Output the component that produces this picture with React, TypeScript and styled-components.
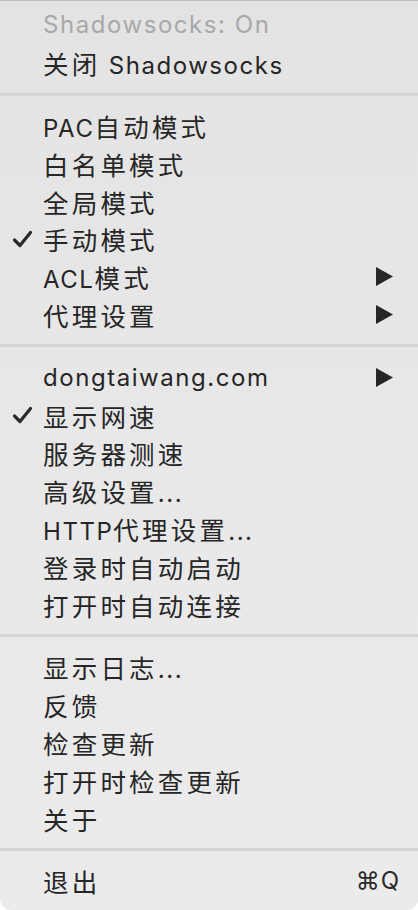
import React from "react";
import styled, { createGlobalStyle } from "styled-components";

const Global = createGlobalStyle`
  html, body { margin: 0; padding: 0; background: #ffffff; }
  body { font-family: Inter, "Noto Sans CJK SC", sans-serif; }
`;

const Menu = styled.div`
  width: 418px;
  height: 910px;
  box-sizing: border-box;
  background: linear-gradient(180deg, #e3e3e3 0%, #e8e8e8 50%, #ebebeb 100%);
  border-top: 1px solid #bdbdbd;
  border-radius: 0 0 11px 11px;
  padding-top: 5px;
  display: flex;
  flex-direction: column;
  overflow: hidden;
  font-family: Inter, "Noto Sans CJK SC", sans-serif;
`;

const Row = styled.div<{ $disabled?: boolean }>`
  height: 37.8px;
  display: flex;
  align-items: center;
  padding: 0 18px 0 43px;
  position: relative;
  color: ${(p) => (p.$disabled ? "#a8a8a8" : "#262626")};
`;

const Label = styled.span`
  flex: 1;
  white-space: nowrap;
  display: flex;
  align-items: baseline;
`;

const Latin = styled.span`
  font-family: Inter, sans-serif;
  font-size: 24px;
  letter-spacing: 1.55px;
  white-space: pre;
`;

const Han = styled.span`
  font-family: "Noto Sans CJK SC", sans-serif;
  font-size: 25.5px;
  letter-spacing: 3.2px;
`;

const Check = styled.svg`
  position: absolute;
  left: 12px;
  top: 10px;
  width: 21px;
  height: 18px;
`;

const Arrow = styled.svg`
  width: 17px;
  height: 19px;
  margin-right: 7px;
`;

const Shortcut = styled.span`
  font-family: Inter, "DejaVu Sans", sans-serif;
  font-size: 24px;
  letter-spacing: 1px;
  color: #2a2a2a;
`;

const Separator = styled.div`
  height: 25px;
  display: flex;
  align-items: center;
  &::after {
    content: "";
    display: block;
    width: 100%;
    height: 3px;
    background: #d4d4d4;
  }
`;

type Item =
  | { kind: "sep" }
  | { kind: "item"; label: string; checked?: boolean; submenu?: boolean; disabled?: boolean; shortcut?: string };

const items: Item[] = [
  { kind: "item", label: "Shadowsocks: On", disabled: true },
  { kind: "item", label: "关闭 Shadowsocks" },
  { kind: "sep" },
  { kind: "item", label: "PAC自动模式" },
  { kind: "item", label: "白名单模式" },
  { kind: "item", label: "全局模式" },
  { kind: "item", label: "手动模式", checked: true },
  { kind: "item", label: "ACL模式", submenu: true },
  { kind: "item", label: "代理设置", submenu: true },
  { kind: "sep" },
  { kind: "item", label: "dongtaiwang.com", submenu: true },
  { kind: "item", label: "显示网速", checked: true },
  { kind: "item", label: "服务器测速" },
  { kind: "item", label: "高级设置..." },
  { kind: "item", label: "HTTP代理设置..." },
  { kind: "item", label: "登录时自动启动" },
  { kind: "item", label: "打开时自动连接" },
  { kind: "sep" },
  { kind: "item", label: "显示日志..." },
  { kind: "item", label: "反馈" },
  { kind: "item", label: "检查更新" },
  { kind: "item", label: "打开时检查更新" },
  { kind: "item", label: "关于" },
  { kind: "sep" },
  { kind: "item", label: "退出", shortcut: "⌘Q" },
];

const hanRe = /([\u3400-\u9fff]+)/;

function renderLabel(text: string) {
  return text
    .split(hanRe)
    .filter((s) => s.length > 0)
    .map((s, i) => (hanRe.test(s) ? <Han key={i}>{s}</Han> : <Latin key={i}>{s}</Latin>));
}

export default function App() {
  return (
    <>
      <Global />
      <Menu>
        {items.map((it, i) =>
          it.kind === "sep" ? (
            <Separator key={i} />
          ) : (
            <Row key={i} $disabled={it.disabled}>
              {it.checked && (
                <Check viewBox="0 0 21 18">
                  <path d="M2.5 10 L8 15.5 L18.5 2.5" fill="none" stroke="#2a2a2a" strokeWidth="3.2" strokeLinecap="round" strokeLinejoin="round" />
                </Check>
              )}
              <Label>{renderLabel(it.label)}</Label>
              {it.submenu && (
                <Arrow viewBox="0 0 17 19">
                  <path d="M0 0 L17 9.5 L0 19 Z" fill="#262626" />
                </Arrow>
              )}
              {it.shortcut && <Shortcut>{it.shortcut}</Shortcut>}
            </Row>
          )
        )}
      </Menu>
    </>
  );
}
